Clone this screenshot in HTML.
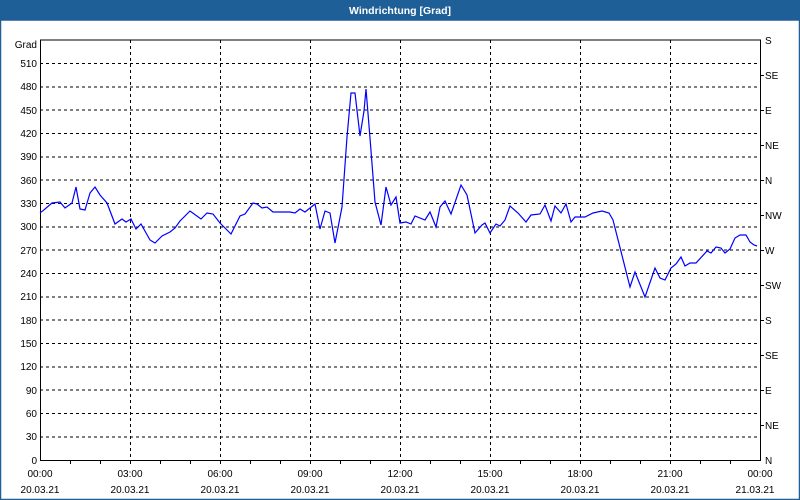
<!DOCTYPE html>
<html><head><style>
html,body{margin:0;padding:0;background:#fff;}
body{width:800px;height:500px;overflow:hidden;position:relative;font-family:"Liberation Sans",sans-serif;}
</style></head><body>
<svg width="800" height="500" xmlns="http://www.w3.org/2000/svg" style="position:absolute;left:0;top:0" font-family="Liberation Sans, sans-serif" font-size="10">
<rect x="0" y="0" width="800" height="500" fill="#fff"/>
<rect x="0" y="0" width="800" height="20" fill="#1e5f98"/>
<rect x="0.5" y="20" width="799" height="479.5" fill="none" stroke="#1e5f98" stroke-width="1.5"/>
<text x="400" y="14" fill="#fff" font-weight="bold" font-size="10.5" text-anchor="middle">Windrichtung [Grad]</text>
<g stroke="#000" stroke-width="1" stroke-dasharray="3,3" shape-rendering="crispEdges">
<path d="M40 63.5H760M40 86.8H760M40 110.2H760M40 133.5H760M40 156.8H760M40 180.2H760M40 203.5H760M40 226.8H760M40 250.2H760M40 273.5H760M40 296.8H760M40 320.2H760M40 343.5H760M40 366.8H760M40 390.2H760M40 413.5H760M40 436.8H760"/>
<path d="M130.5 40V460M220.5 40V460M310.5 40V460M400.5 40V460M490.5 40V460M580.5 40V460M670.5 40V460"/>
</g>
<g stroke="#000" stroke-width="1" fill="none" shape-rendering="crispEdges">
<path d="M40.5 40V460.5H760.5V40H40"/>
<path d="M70.5 460v4M100.5 460v4M130.5 460v4M160.5 460v4M190.5 460v4M220.5 460v4M250.5 460v4M280.5 460v4M310.5 460v4M340.5 460v4M370.5 460v4M400.5 460v4M430.5 460v4M460.5 460v4M490.5 460v4M520.5 460v4M550.5 460v4M580.5 460v4M610.5 460v4M640.5 460v4M670.5 460v4M700.5 460v4M730.5 460v4"/>
<path d="M760 75.5h4M760 110.5h4M760 145.5h4M760 180.5h4M760 215.5h4M760 250.5h4M760 285.5h4M760 320.5h4M760 355.5h4M760 390.5h4M760 425.5h4"/>
</g>
<g fill="#000" text-anchor="end">
<text x="37" y="48">Grad</text>
<text x="37" y="67">510</text><text x="37" y="90">480</text><text x="37" y="114">450</text><text x="37" y="137">420</text><text x="37" y="160">390</text><text x="37" y="184">360</text><text x="37" y="207">330</text><text x="37" y="230">300</text><text x="37" y="254">270</text><text x="37" y="277">240</text><text x="37" y="300">210</text><text x="37" y="324">180</text><text x="37" y="347">150</text><text x="37" y="370">120</text><text x="37" y="394">90</text><text x="37" y="417">60</text><text x="37" y="440">30</text><text x="37" y="464">0</text>
</g>
<g fill="#000">
<text x="765" y="44">S</text><text x="765" y="79">SE</text><text x="765" y="114">E</text><text x="765" y="149">NE</text><text x="765" y="184">N</text><text x="765" y="219">NW</text><text x="765" y="254">W</text><text x="765" y="289">SW</text><text x="765" y="324">S</text><text x="765" y="359">SE</text><text x="765" y="394">E</text><text x="765" y="429">NE</text><text x="765" y="464">N</text>
</g>
<g fill="#000" text-anchor="middle">
<text x="40" y="477">00:00</text><text x="130" y="477">03:00</text><text x="220" y="477">06:00</text><text x="310" y="477">09:00</text><text x="400" y="477">12:00</text><text x="490" y="477">15:00</text><text x="580" y="477">18:00</text><text x="670" y="477">21:00</text><text x="760" y="477">00:00</text>
<text x="40" y="493">20.03.21</text><text x="130" y="493">20.03.21</text><text x="220" y="493">20.03.21</text><text x="310" y="493">20.03.21</text><text x="400" y="493">20.03.21</text><text x="490" y="493">20.03.21</text><text x="580" y="493">20.03.21</text><text x="670" y="493">20.03.21</text><text x="755" y="493">21.03.21</text>
</g>
<polyline fill="none" stroke="#0000ff" stroke-width="1.2" points="40,212.7 43,210.7 52,203 60,202 65,208 72,203 76,187 80,209 85,210 90,193 95,187 100,195 107,203 115,224 122,219 126,222 131,219 136,229 141,224 150,240 155,243 162,236 170,232 175,228 180,221 190,211 201,219 207,213 213,214 220,223 231,234 240,216 245,214 253,203 257,204 262,208 267,207 273,212 290,212 295,213 300,209 305,212 315,204 320,229 325,211 330,213 335,243 342,207 347,137 351,93 355,93 360,136 364,111 366,89 370,138 375,202 381,225 386,187 391,205 396,197 400,223 406,222 411,224 415,216 425,220 430,212 436,227 440,207 445,201 451,214 461,185 467,195 475,233 482,225 485,223 490,233 496,224 500,226 505,220 510,206 518,213 526,222 531,215 540,214 545,205 551,221 555,206 561,213 566,204 571,222 575,217 585,217 593,213 602,211 609,213 613,220 630,287 635,272 645,297 655,268 660,278 665,280 671,268 676,264 681,257 685,266 690,263 696,263 707,251 711,253 716,247 721,248 725,253 730,249 735,238 740,235 746,235 750,242 754,245 757,246"/>
</svg>
</body></html>
